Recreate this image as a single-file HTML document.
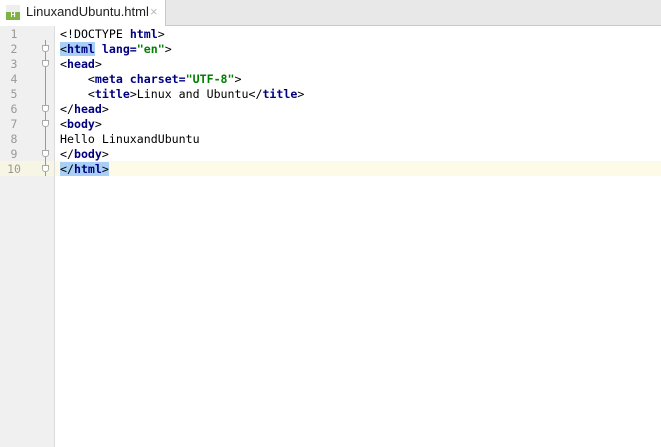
<!DOCTYPE html>
<html><head><style>
body{margin:0;width:661px;height:447px;background:#fff;position:relative;overflow:hidden;font-family:"DejaVu Sans Mono","Liberation Mono",monospace;}
#tabs{position:absolute;left:0;top:0;width:661px;height:25px;background:#e8e8e8;border-bottom:1px solid #c8c8c8;}
#tab{position:absolute;left:0;top:0;width:165px;height:26px;background:#fff;border-right:1px solid #c8c8c8;font-family:"Liberation Sans",sans-serif;font-size:13px;color:#222;}
#gut{position:absolute;left:0;top:26px;width:54px;height:421px;background:#f0f0f0;border-right:1px solid #ddd;}
.ln{position:absolute;left:0;width:28px;text-align:center;font-size:11.5px;color:#999;}
.cl{position:absolute;left:60px;font-size:11.6px;white-space:pre;color:#000;}
.t{color:#000080;font-weight:bold}
.s{color:#008000;font-weight:bold}
.h{background:#a8cff5}
.f{position:absolute;left:42px;width:7px;height:7px;border:1px solid #aaa;border-radius:0 0 3px 3px;background:#fff;box-sizing:border-box}
</style></head><body>
<div id="tabs"><div id="tab">
<div style="position:absolute;left:6px;top:5px;width:14px;height:15px;background:#eee;"></div>
<div style="position:absolute;left:6px;top:12px;width:14px;height:8px;background:#7cb342;color:#fff;font-size:7px;line-height:8px;text-align:center;font-weight:bold">H</div>
<span style="position:absolute;left:26px;top:4px">LinuxandUbuntu.html</span>
<span style="position:absolute;left:150px;top:4px;color:#bbb">×</span></div></div>
<div style="position:absolute;left:0;top:161px;width:661px;height:15px;background:#fdfbe8"></div>
<div id="gut"></div>
<div style="position:absolute;left:0;top:161px;width:54px;height:15px;background:#f7f5e3"></div>
<div style="position:absolute;left:45px;top:40px;width:1px;height:136px;background:#999"></div>
<div class="ln" style="top:27px">1</div><div class="ln" style="top:42px">2</div><div class="ln" style="top:57px">3</div><div class="ln" style="top:72px">4</div><div class="ln" style="top:87px">5</div><div class="ln" style="top:102px">6</div><div class="ln" style="top:117px">7</div><div class="ln" style="top:132px">8</div><div class="ln" style="top:147px">9</div><div class="ln" style="top:162px">10</div>
<div class="f" style="top:45px"></div><div class="f" style="top:60px"></div><div class="f" style="top:105px"></div><div class="f" style="top:120px"></div><div class="f" style="top:150px"></div><div class="f" style="top:165px"></div>
<div class="cl" style="top:27px">&lt;!DOCTYPE <span class="t">html</span>&gt;</div>
<div class="cl" style="top:42px"><span class="h">&lt;<span class="t">html</span></span> <span class="t">lang=</span><span class="s">"en"</span>&gt;</div>
<div class="cl" style="top:57px">&lt;<span class="t">head</span>&gt;</div>
<div class="cl" style="top:72px">    &lt;<span class="t">meta charset=</span><span class="s">"UTF-8"</span>&gt;</div>
<div class="cl" style="top:87px">    &lt;<span class="t">title</span>&gt;Linux and Ubuntu&lt;/<span class="t">title</span>&gt;</div>
<div class="cl" style="top:102px">&lt;/<span class="t">head</span>&gt;</div>
<div class="cl" style="top:117px">&lt;<span class="t">body</span>&gt;</div>
<div class="cl" style="top:132px">Hello LinuxandUbuntu</div>
<div class="cl" style="top:147px">&lt;/<span class="t">body</span>&gt;</div>
<div class="cl" style="top:162px"><span class="h">&lt;/<span class="t">html</span>&gt;</span></div>
</body></html>
